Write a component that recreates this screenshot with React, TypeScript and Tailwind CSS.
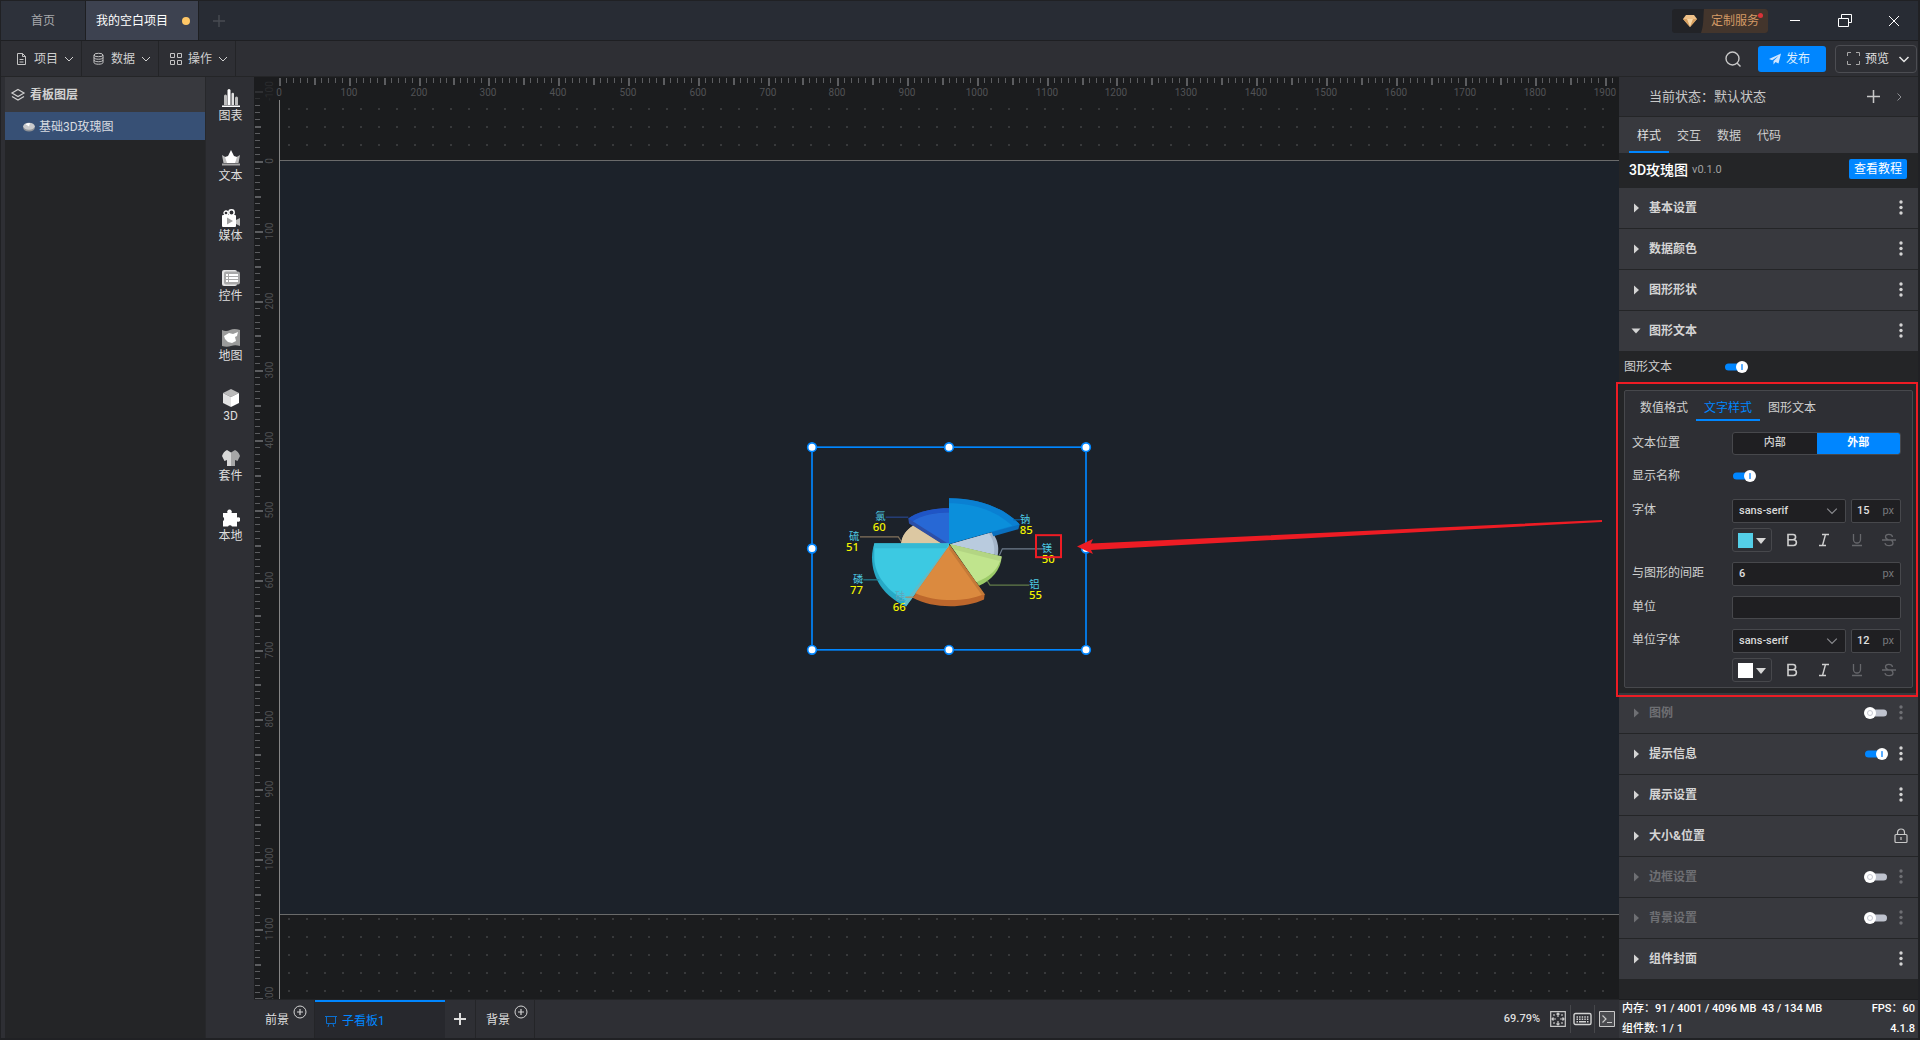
import React, { useState } from "react";

const UNIT = 6.979;

function Chevron({ className = "", dir = "down" }: { className?: string; dir?: "down" | "right" }) {
  return (
    <svg viewBox="0 0 10 10" className={className} fill="none" stroke="currentColor" strokeWidth="1" aria-hidden>
      {dir === "down" ? <path d="M1 3l4 4 4-4" /> : <path d="M3.5 1.5L7 5 3.5 8.5" />}
    </svg>
  );
}

function PlusIcon({ className = "" }: { className?: string }) {
  return (
    <svg viewBox="0 0 12 12" className={className} stroke="currentColor" fill="none" strokeWidth="1.4" aria-hidden>
      <path d="M6 0v12M0 6h12" />
    </svg>
  );
}

function CirclePlus() {
  return (
    <svg viewBox="0 0 14 14" className="size-3.5" stroke="#d4d4d4" fill="none" aria-hidden>
      <circle cx="7" cy="7" r="6" />
      <path d="M7 4v6M4 7h6" strokeWidth="1.2" />
    </svg>
  );
}

function Toggle({ label, on: initial = false }: { label: string; on?: boolean }) {
  const [on, setOn] = useState(initial);
  return (
    <label className="relative block h-3 w-6 shrink-0">
      <input
        type="checkbox"
        aria-label={label}
        checked={on}
        onChange={() => setOn(!on)}
        className="absolute inset-0 m-0 size-full cursor-pointer opacity-0"
      />
      <svg viewBox="0 0 24 12" className="pointer-events-none block h-3 w-6" aria-hidden>
        <rect x="1" y="2.5" width="22" height="7" rx="3.5" fill={on ? "#0086ff" : "#bfc3ce"} />
        <circle cx={on ? 18 : 6} cy="6" r="6" fill="#fff" />
        {on ? (
          <rect x="17" y="3" width="2" height="6" rx="0.5" fill="#5aadff" />
        ) : (
          <circle cx="6" cy="6" r="2.5" fill="none" stroke="#c5c8d2" />
        )}
      </svg>
    </label>
  );
}

function TitleBar() {
  return (
    <header className="flex h-10 shrink-0 items-stretch border-b border-[#1e1f22] bg-[#282c34] text-[12px]">
      <button className="w-[85px] border-r border-[#1e1f22] bg-[#2d313a] text-[#a8a9ac]">首页</button>
      <div className="flex w-[113px] items-center border-r border-[#1e1f22] bg-[#3d4250]">
        <button className="flex flex-1 items-center justify-between pr-2 pl-2.5 text-white">
          我的空白项目
          <span className="size-2 rounded-full bg-[#ffc766]" />
        </button>
      </div>
      <button aria-label="新建" className="w-10 pl-3.5 text-[#484b52]">
        <PlusIcon className="size-3" />
      </button>
      <div className="ml-auto flex items-center">
        <button className="mr-0.5 flex h-6 w-24 items-center overflow-hidden rounded-[3px] bg-[#222327]">
          <svg viewBox="0 0 32 24" className="h-6 w-8" aria-hidden>
            <path d="M14 6h8l3 4-7 8-7-8z" fill="#eec088" />
            <path d="M15 10h6l-3 8z" fill="#f8d8a8" />
            <path d="M11 10h4l3 8zM21 10h4l-7 8z" fill="#d8a060" />
            <path d="M32 0c-1 8 0 16-3 24h3z" fill="#43352c" />
          </svg>
          <span className="relative flex h-6 flex-1 items-center bg-[#43352c] pl-[7px] text-[#d49a66]">
            定制服务
            <span className="absolute top-1 right-[5px] size-[5px] rounded-full bg-[#d93238]" />
          </span>
        </button>
        <button aria-label="最小化" className="flex h-10 w-[50px] items-center justify-center text-white">
          <svg viewBox="0 0 16 16" className="size-4" stroke="currentColor"><path d="M3 7.500h10" /></svg>
        </button>
        <button aria-label="还原" className="flex h-10 w-[50px] items-center justify-center text-white">
          <svg viewBox="0 0 16 16" className="size-4" stroke="currentColor" fill="none">
            <path d="M1.500 5.500h10v8h-10zM4.500 5.500v-4h10v8h-3" />
          </svg>
        </button>
        <button aria-label="关闭" className="flex h-10 w-12 items-center justify-center text-white">
          <svg viewBox="0 0 16 16" className="size-4" stroke="currentColor"><path d="M3 3l10 10M13 3L3 13" /></svg>
        </button>
      </div>
    </header>
  );
}

const menuIcons = [
  <path key="a" d="M2.500 1.500h5l3 3v8h-8zM7.500 1.500v3h3M4.500 7.500h4M4.500 10h4" />,
  <g key="b">
    <ellipse cx="6.500" cy="3" rx="4.500" ry="1.700" />
    <path d="M2 3v7.500c0 2.300 9 2.300 9 0V3M2 5.500c0 2.300 9 2.300 9 0M2 8c0 2.300 9 2.300 9 0" />
  </g>,
  <path key="c" d="M1.500 1.500h4v4h-4zM8.500 1.500h4v4h-4zM1.500 8.500h4v4h-4zM8.500 8.500h4v4h-4z" />,
];

function MenuBar() {
  return (
    <div className="flex h-9 shrink-0 items-stretch border-b border-[#242527] bg-[#2e2f34] text-[12px] text-[#d0d0d0]">
      <nav className="flex">
        {["项目", "数据", "操作"].map((name, i) => (
          <button key={name} className="flex w-[77px] items-center gap-[5px] border-r border-[#232427] pl-2.5 first:w-[81px] first:pl-3.5">
            <svg viewBox="0 0 14 14" className="size-3.5" fill="none" stroke="#c4c4c4" aria-hidden>
              {menuIcons[i]}
            </svg>
            {name}
            <Chevron className="ml-px size-2.5" />
          </button>
        ))}
      </nav>
      <div className="ml-auto flex items-center pr-px">
        <button aria-label="搜索" className="mr-4">
          <svg viewBox="0 0 18 18" className="size-[18px]" fill="none" stroke="#c8c8c8" strokeWidth="1.400">
            <circle cx="8.500" cy="8.500" r="6.500" />
            <path d="M13 13l3.500 3.500" />
          </svg>
        </button>
        <button className="mr-[9px] flex h-[26px] w-[68px] items-center gap-[5px] rounded-[3px] bg-[#0086ff] pl-[11px] text-[#dceeff]">
          <svg viewBox="0 0 12 12" className="size-3" fill="#cfe6ff" aria-hidden>
            <path d="M12 .5L0 6l3.200 1.300L9.500 3 4.500 8v3.500l2-2.500 3 1.500z" />
          </svg>
          发布
        </button>
        <button className="flex h-7 w-[82px] items-center gap-[5px] rounded-[4px] border border-[#4c4d52] pl-[11px] text-[#e0e0e0]">
          <svg viewBox="0 0 13 13" className="size-[13px]" fill="none" stroke="#a8a8a8" aria-hidden>
            <path d="M.500 4V.500H4M9 .500h3.500V4M12.500 9v3.500H9M4 12.500H.500V9" />
          </svg>
          预览
          <svg viewBox="0 0 12 12" className="ml-1 size-3" fill="none" stroke="#e6e6e6" strokeWidth="1.500" aria-hidden>
            <path d="M1.500 4L6 8.500 10.500 4" />
          </svg>
        </button>
      </div>
    </div>
  );
}

function LayerPanel() {
  return (
    <aside className="ml-1 flex w-[200px] shrink-0 flex-col bg-[#242527] text-[12px]">
      <h2 className="flex h-[35px] items-center gap-1 bg-[#38393e] pl-[5px] font-bold text-[#d2d2d2]">
        <svg viewBox="0 0 16 14" className="h-3.5 w-4" fill="none" stroke="#d0d0d0" strokeWidth="1.200" aria-hidden>
          <path d="M8 1.500l6 3.500-6 3.500L2 5zM2 8.500l6 3.500 6-3.500" />
        </svg>
        看板图层
      </h2>
      <button className="flex h-7 items-center gap-1 bg-[#375075] pt-px pl-[18px] text-[#d8dbe0]">
        <svg viewBox="0 0 12 10" className="h-2.5 w-3" aria-hidden>
          <ellipse cx="6" cy="5.800" rx="5.800" ry="3.800" fill="#8f9297" />
          <ellipse cx="6" cy="4.300" rx="5.800" ry="3.500" fill="#c9cacc" />
          <path d="M6 4.500L2.500 2.200A6 3.500 0 0 1 7 .9z" fill="#fff" />
        </svg>
        基础3D玫瑰图
      </button>
    </aside>
  );
}

const tools: { name: string; icon: React.ReactNode }[] = [
  {
    name: "图表",
    icon: (
      <>
        <path d="M2 7a1 1 0 0 1 3 0v9H2zM13 9a1.200 1.200 0 0 1 3 0v7h-3z" fill="#bdbdbd" />
        <path d="M5.500 1.500a1.500 1.500 0 0 1 3 0V16h-3z" fill="#fff" />
        <path d="M9.500 5a1.200 1.200 0 0 1 2.500 0v11H9.500z" fill="#e0e0e0" />
        <path d="M0 16.500h18V18H0z" fill="#fff" />
      </>
    ),
  },
  {
    name: "文本",
    icon: (
      <>
        <path d="M0 6l5 3 4-3 4 3 5-3-1.500 8h-15z" fill="#bdbdbd" />
        <path d="M9 1l3 6 3 1-2 6H5L3 8l3-1z" fill="#fff" />
        <path d="M0 14.500h18V16.500H0z" fill="#a6a6a6" />
      </>
    ),
  },
  {
    name: "媒体",
    icon: (
      <>
        <circle cx="4" cy="4" r="2" fill="none" stroke="#fff" strokeWidth="1.300" />
        <circle cx="9.500" cy="3.500" r="2.700" fill="none" stroke="#fff" strokeWidth="1.500" />
        <rect x="0" y="6" width="14" height="12" rx="1" fill="#fff" />
        <path d="M14 11l4-2v8l-4-2z" fill="#bdbdbd" />
        <path d="M5 8.500l6 3.500-6 3.500z" fill="#a0a0a0" />
      </>
    ),
  },
  {
    name: "控件",
    icon: (
      <>
        <rect x="0" y="1" width="15" height="16" rx="2" fill="#e4e4e4" />
        <rect x="2" y="2.500" width="16" height="13" rx="2" fill="#a9a9a9" />
        <path d="M4 5h2v2H4zM7 5h9v2H7zM4 8h2v2H4zM7 8h9v2H7zM4 11h2v2H4zM7 11h9v2H7z" fill="#fff" />
      </>
    ),
  },
  {
    name: "地图",
    icon: (
      <>
        <path d="M0 1q4 2 8 0t10 0v16q-5-1.500-9 0T0 17z" fill="#9b9b9b" />
        <path d="M2 7l5-3 4 1 5-2-1 4-2 1 1 4-4 2-4-1-3-3z" fill="#fff" />
      </>
    ),
  },
  {
    name: "3D",
    icon: (
      <>
        <path d="M9 0l8 4-8 4-8-4z" fill="#b9b9b9" />
        <path d="M1 4l8 4v10l-8-4z" fill="#e2e2e2" />
        <path d="M17 4L9 8v10l8-4z" fill="#fff" />
      </>
    ),
  },
  {
    name: "套件",
    icon: (
      <>
        <path d="M5 1l4 2.500V17H5v-6l-2.500 1L0 7q1.500-4.500 5-6z" fill="#d8d8d8" />
        <path d="M13 1L9 3.500V17h4v-6l2.500 1L18 7q-1.500-4.500-5-6z" fill="#a6a6a6" />
      </>
    ),
  },
  {
    name: "本地",
    icon: (
      <path
        d="M1 4h4.500a2.300 2.300 0 1 1 4 0H15v4.500a2.300 2.300 0 1 1 0 4V17.500H10a2.300 2.300 0 0 0-4 0H1V12a2.300 2.300 0 0 0 0-4z"
        fill="#fff"
      />
    ),
  },
];

function ToolColumn() {
  return (
    <nav className="flex w-[49px] shrink-0 flex-col border-l border-[#27282b] bg-[#2e2f34] pl-px text-[12px] text-[#dedede]">
      {tools.map((t) => (
        <button key={t.name} className="flex h-15 flex-col items-center justify-center gap-px pb-0.5 leading-4">
          <svg viewBox="0 0 18 18" className="size-[18px]" aria-hidden>
            {t.icon}
          </svg>
          {t.name}
        </button>
      ))}
    </nav>
  );
}

function TopRuler() {
  const ticks = Array.from({ length: 192 }, (_, i) => i);
  return (
    <svg className="block h-[23px] w-full overflow-visible" fill="#5c5d60" aria-hidden>
      {ticks.map((i) => {
        const x = Math.round(i * UNIT);
        const hundred = i % 10 === 0;
        const fifty = i % 5 === 0;
        return (
          <g key={i}>
            <rect x={x} y={1} width={fifty ? 2 : 1} height={hundred ? 8 : fifty ? 7 : 5} />
            {hundred && (
              <text x={x} y={19} textAnchor="middle" fontSize="10" fill="#515255">
                {i * 10}
              </text>
            )}
          </g>
        );
      })}
    </svg>
  );
}

function LeftRuler() {
  const ticks = Array.from({ length: 132 }, (_, i) => i - 10);
  return (
    <svg className="row-span-2 block h-full w-[25px]" fill="#5c5d60" aria-hidden>
      {ticks.map((i) => {
        const y = Math.round(84 + i * UNIT);
        const hundred = i % 10 === 0;
        const fifty = i % 5 === 0;
        return (
          <g key={i} opacity={i < -8 ? 0.3 : 1}>
            <rect x={1} y={y} width={hundred ? 8 : fifty ? 6 : 5} height={fifty ? 2 : 1} />
            {hundred && (
              <text transform={`translate(19 ${y}) rotate(-90)`} textAnchor="middle" fontSize="10" fill="#515255">
                {i * 10}
              </text>
            )}
          </g>
        );
      })}
    </svg>
  );
}

const labels: { name: string; value: number; x: number; y: number; vx: number; vy: number }[] = [
  { name: "钠", value: 85, x: 720, y: 281, vx: 719, vy: 316 },
  { name: "镁", value: 50, x: 785, y: 369, vx: 785, vy: 402 },
  { name: "铝", value: 55, x: 748, y: 478, vx: 747, vy: 511 },
  { name: "硅", value: 66, x: 345, y: 514, vx: 338, vy: 546 },
  { name: "磷", value: 77, x: 219, y: 461, vx: 210, vy: 494 },
  { name: "硫", value: 51, x: 207, y: 332, vx: 198, vy: 366 },
  { name: "氯", value: 60, x: 286, y: 274, vx: 278, vy: 306 },
];

const handles = [
  [96, 54], [507, 54], [918, 54],
  [96, 358], [918, 358],
  [96, 662], [507, 662], [918, 662],
];

function RoseChart() {
  return (
    <svg viewBox="96 54 822 608" className="absolute top-[286px] left-[532px] h-[203px] w-[274px] overflow-visible" role="img" aria-label="基础3D玫瑰图">
      <path d="M507 237C450 237 407 250 385 268l2 15 120 74z" fill="#2c4fa8" />
      <path d="M507 237C450 237 407 250 385 268l13 8c28-18 66-26 109-26z" fill="#1f55c6" />
      <path d="M507 250c-42 0-81 8-109 26l109 69z" fill="#2768d5" />
      <path d="M399 290c-24 16-38 38-36 67h143z" fill="#c3ab8c" />
      <path d="M399 290c-22 14-34 32-36 54h122z" fill="#dcc8a2" />
      <path d="M510 345l126-36c16 20 22 42 17 70z" fill="#a4b5c9" />
      <path d="M510 345l116-33c14 18 19 40 16 64z" fill="#b9cbde" />
      <path d="M507 207c90 0 168 30 212 79l-4 14-75 21-6-14-127 38z" fill="#0a6fbe" />
      <path d="M507 207c90 0 168 30 212 79l-209 57h-3z" fill="#0a80d2" />
      <path d="M507 222c76 0 142 24 190 68l-187 53h-3z" fill="#0b8fdb" />
      <path d="M283 343h224v14L378 532C312 502 276 448 276 385c0-15 3-29 7-42z" fill="#27a9c6" />
      <path d="M283 343h224v14L378 514C325 488 283 440 283 385z" fill="#3cc9e2" />
      <path d="M283 343h224l-8 14H281z" fill="#35b9d4" />
      <path d="M507 357L378 532l-6-12 127-163z" fill="#5cbdcb" />
      <path d="M510 345l155 37c-2 38-30 72-68 88z" fill="#9ccb68" />
      <path d="M510 345l153 38c-4 34-34 62-74 76z" fill="#c0e48d" />
      <path d="M510 345l155 37-3 14-138-34z" fill="#b3d583" />
      <path d="M508 350l106 145-2 16c-60 28-152 28-214-5z" fill="#bd672c" />
      <path d="M508 350l104 145c-58 24-144 24-206-3z" fill="#db8a3f" />
      <path d="M508 345l106 150-8 3-98-138z" fill="#c47a38" />
      <g fill="none" strokeWidth="3.500">
        <path d="M317 264h68" stroke="#27478f" />
        <path d="M240 323h115l9 14" stroke="#83735c" />
        <path d="M250 452h48" stroke="#238399" />
        <path d="M658 379l9-20h120" stroke="#6f7d8d" />
        <path d="M622 455l8 13h118" stroke="#627c49" />
        <path d="M700 272h20" stroke="#0b64a5" />
        <path d="M376 504h24" stroke="#ad8a60" />
      </g>
      {labels.map((l) => (
        <g key={l.name}>
          <text x={l.x} y={l.y} fontSize="31" fill={l.name === "硅" ? "#5fa6ba" : "#4fcde6"}>
            {l.name}
          </text>
          <text x={l.vx} y={l.vy} fontSize="34" fontWeight="500" fill="#f4f400" className="font-['Noto_Sans',sans-serif]">
            {l.value}
          </text>
        </g>
      ))}
      <rect x="96" y="54" width="822" height="608" fill="none" stroke="#0086ff" strokeWidth="5" />
      {handles.map(([x, y]) => (
        <circle key={`${x}-${y}`} cx={x} cy={y} r="13" fill="#fff" stroke="#0086ff" strokeWidth="5" />
      ))}
      <rect x="768" y="318" width="75" height="66" fill="none" stroke="#ed1c24" strokeWidth="6" />
    </svg>
  );
}

function Workspace() {
  return (
    <section className="grid min-h-0 flex-1 grid-cols-[25px_1fr] grid-rows-[23px_1fr] overflow-hidden bg-[#1b1c1e]">
      <LeftRuler />
      <TopRuler />
      <div className="relative overflow-hidden border-l border-[#858585]">
        <svg className="block size-full" aria-hidden>
          <defs>
            <pattern id="dots" width="18" height="18" patternUnits="userSpaceOnUse">
              <rect x="8" y="8" width="2" height="2" fill="#38393b" />
            </pattern>
          </defs>
          <rect width="100%" height="100%" fill="url(#dots)" />
        </svg>
        <div className="absolute top-[60px] left-0 h-[755px] w-full border-y border-[#6a6b6b] bg-[#1c222a]">
          <RoseChart />
        </div>
        <svg viewBox="0 0 526 36" className="absolute top-[419px] left-[797px] h-9 w-[526px]" fill="#ed1c24" aria-hidden>
          <path d="M0 27.500L16 20l-2 4.500L525 1v2L14 31l2 4z" />
        </svg>
      </div>
    </section>
  );
}

function BoardBar() {
  return (
    <footer className="flex h-[39px] shrink-0 items-stretch border-t border-[#232427] bg-[#2e2f34] text-[12px] text-[#dedede]">
      <button className="flex w-[61px] items-start gap-1 border-r border-[#242528] pl-[11px]">
        <span className="mt-[11px]">前景</span>
        <span className="mt-[5px]"><CirclePlus /></span>
      </button>
      <button className="flex w-[130px] items-center gap-[5px] border-t-2 border-[#0086ff] bg-[#27282d] pt-0.5 pl-2.5 text-[#0086ff]">
        <svg viewBox="0 0 12 12" className="size-3" fill="none" stroke="#0b6fce" aria-hidden>
          <path d="M0 1.500h12M1.500 1.500v7h9v-7M4 9l-1 3M8 9l1 3" />
        </svg>
        子看板1
      </button>
      <button aria-label="添加看板" className="flex w-[31px] items-center justify-center border-r border-[#242528]">
        <svg viewBox="0 0 12 12" className="size-3" stroke="#dedede" strokeWidth="2"><path d="M6 0v12M0 6h12" /></svg>
      </button>
      <button className="flex w-[59px] items-start gap-1 border-r border-[#242528] pl-2.5">
        <span className="mt-[11px]">背景</span>
        <span className="mt-[5px]"><CirclePlus /></span>
      </button>
      <div className="ml-auto flex items-center pr-1">
        <span className="mr-2.5 text-[11px] font-medium">69.79%</span>
        <button aria-label="适应画布" className="pr-1">
          <svg viewBox="0 0 16 16" className="size-4" fill="none" stroke="#c8c8c8" strokeWidth="1.200">
            <path d="M.700.700h14.600v14.600H.700z" />
            <path d="M8 2v4M8 10v4M2 8h4M10 8h4M6.500 3.500L8 2l1.500 1.500M6.500 12.500L8 14l1.500-1.500M3.500 6.500L2 8l1.500 1.500M12.500 6.500L14 8l-1.500 1.500" />
            <path d="M4 3v2M3 4h2M12 3v2M11 4h2M4 11v2M3 12h2M12 11v2M11 12h2" strokeWidth=".7" />
          </svg>
        </button>
        <button aria-label="快捷键" className="flex h-7 items-center border-x border-[#46474b] px-0.5">
          <svg viewBox="0 0 19 14" className="h-3.5 w-[19px]" fill="none" stroke="#d2d2d2" strokeWidth="1.400">
            <rect x="1" y="1.500" width="17" height="11" rx="1.500" />
            <path d="M3.500 5h12M3.500 7.300h12" strokeDasharray="1.500 1.100" />
            <path d="M3.500 9.800h1.500M6 9.800h7M14 9.800h1.500" />
          </svg>
        </button>
        <button aria-label="控制台" className="pl-1">
          <svg viewBox="0 0 16 16" className="size-4" fill="#4a4b4f" stroke="#c8c8c8">
            <path d="M.5.5h15v15H.5z" />
            <path d="M3.500 4.500L7 8l-3.500 3.500M8 11.500h5" fill="none" strokeWidth="1.200" />
          </svg>
        </button>
      </div>
    </footer>
  );
}

function SectionHead({ name, open, dim, toggle, lock }: { name: string; open?: boolean; dim?: boolean; toggle?: boolean; lock?: boolean }) {
  return (
    <div className={`flex h-[41px] items-center border-b border-[#242527] bg-[#38393e] pr-3 pl-3 text-[12px] ${dim ? "text-[#6e6f73]" : "text-[#d4d4d4]"}`}>
      <button aria-expanded={!!open} className="flex flex-1 items-center gap-2 font-bold">
        <svg viewBox="0 0 10 10" className="size-2.5" fill="currentColor" aria-hidden>
          {open ? <path d="M.500 2.500h9L5 7.500z" /> : <path d="M3 .500v9L8 5z" />}
        </svg>
        {name}
      </button>
      {toggle !== undefined && <Toggle label={name} on={toggle} />}
      {lock ? (
        <button aria-label="锁定" className="-mr-0.5">
          <svg viewBox="0 0 14 16" className="h-4 w-3.5" fill="none" stroke="#c8c8c8" strokeWidth="1.200">
            <rect x="1" y="6.500" width="12" height="8" rx="1" />
            <path d="M3.500 6.500V4.500a3.500 3.500 0 0 1 7 0v2M7 9v3" />
          </svg>
        </button>
      ) : (
        <button aria-label={`${name}更多`} className="ml-2">
          <svg viewBox="0 0 10 16" className="h-4 w-2.5" fill="currentColor">
            <circle cx="5" cy="2" r="1.700" />
            <circle cx="5" cy="7.500" r="1.700" />
            <circle cx="5" cy="13" r="1.700" />
          </svg>
        </button>
      )}
    </div>
  );
}

function Row({ label, htmlFor, children }: { label: string; htmlFor?: string; children: React.ReactNode }) {
  return (
    <div className="flex items-start">
      <label htmlFor={htmlFor} className="w-[100px] shrink-0 leading-[22px]">
        {label}
      </label>
      <div className="min-w-0 flex-1">{children}</div>
    </div>
  );
}

function FontRow({ id, label, size, swatch }: { id: string; label: string; size: string; swatch: string }) {
  return (
    <Row label={label} htmlFor={id}>
      <div className="flex gap-[5px]">
        <div className="relative w-[114px]">
          <select id={id} className="h-6 w-full appearance-none rounded-[2px] border border-[#47484c] bg-[#1f1f22] pl-1.5 text-[11px] font-medium text-[#dadada]">
            <option>sans-serif</option>
          </select>
          <Chevron className="pointer-events-none absolute top-[6px] right-2 size-3 text-[#8a8b8f]" />
        </div>
        <div className="flex h-6 flex-1 items-center rounded-[2px] border border-[#47484c] bg-[#1f1f22] pr-1.5 pl-[5px]">
          <input aria-label={`${label}大小`} defaultValue={size} className="w-0 flex-1 bg-transparent text-[11px] font-medium text-[#e0e0e0] outline-none" />
          <span className="text-[11px] text-[#77787c]">px</span>
        </div>
      </div>
      <div className="mt-[5px] flex h-6 items-center">
        <button aria-label={`${label}颜色`} className="flex h-6 w-10 items-center gap-[3px] rounded-[3px] border border-[#47484c] pl-[5px]">
          <span className="size-[15px]" style={{ backgroundColor: swatch }} />
          <svg viewBox="0 0 10 6" className="mt-0.5 h-1.5 w-2.5" fill="#d6d6d6" aria-hidden><path d="M0 0h10L5 6z" /></svg>
        </button>
        <div className="ml-[13px] flex flex-1 justify-between pr-[5px]">
          <button aria-label="粗体">
            <svg viewBox="0 0 14 14" className="size-3.5" fill="none" stroke="#cfcfcf" strokeWidth="1.600">
              <path d="M3 1.500h5a2.600 2.600 0 0 1 0 5.200H3zM3 6.700h5.500a2.900 2.900 0 0 1 0 5.800H3z" />
            </svg>
          </button>
          <button aria-label="斜体">
            <svg viewBox="0 0 14 14" className="size-3.5" fill="none" stroke="#cfcfcf" strokeWidth="1.400">
              <path d="M5 1.500h7M2 12.500h7M8.500 1.500l-3 11" />
            </svg>
          </button>
          <button aria-label="下划线">
            <svg viewBox="0 0 14 14" className="size-3.5" fill="none" stroke="#66676b" strokeWidth="1.300">
              <path d="M3.500 1v5.500a3.500 3.500 0 0 0 7 0V1M2 12.500h10" />
            </svg>
          </button>
          <button aria-label="删除线">
            <svg viewBox="0 0 14 14" className="size-3.5" fill="none" stroke="#66676b" strokeWidth="1.300">
              <path d="M10.500 4C10 .500 3.500.500 3.500 4c0 1.500 1.500 2.400 3.500 3M3 10c.500 3.500 8 3.500 8 0 0-1.300-.7-2.200-2-2.800M0 7h14" />
            </svg>
          </button>
        </div>
      </div>
    </Row>
  );
}

function TextStylePanel() {
  return (
    <div className="relative mx-[5px] rounded-[2px] border border-[#47484c] bg-[#2e2f34] px-[7px] pb-[5px]">
      <div role="tablist" className="flex h-[30px] items-stretch">
        <button role="tab" className="border-b-2 border-transparent px-2 pt-1.5">数值格式</button>
        <button role="tab" aria-selected className="border-b-2 border-[#0086ff] px-2 pt-1.5 text-[#0086ff]">文字样式</button>
        <button role="tab" className="border-b-2 border-transparent px-2 pt-1.5">图形文本</button>
      </div>
      <div className="mt-[11px] flex flex-col gap-2.5 pr-1">
        <Row label="文本位置">
          <div className="flex h-[23px] overflow-hidden rounded-[3px] border border-[#47484c] bg-[#1f1f22] text-[11px] font-medium">
            <button className="flex-1">内部</button>
            <button className="flex-1 bg-[#0086ff] font-bold text-white">外部</button>
          </div>
        </Row>
        <Row label="显示名称">
          <div className="flex h-6 items-center pb-0.5"><Toggle label="显示名称" on /></div>
        </Row>
        <FontRow id="font" label="字体" size="15" swatch="#54cfe8" />
        <Row label="与图形的间距" htmlFor="gap">
          <div className="flex h-6 items-center rounded-[2px] border border-[#47484c] bg-[#1f1f22] px-1.5">
            <input id="gap" defaultValue="6" className="w-0 flex-1 bg-transparent text-[11px] font-medium text-[#e0e0e0] outline-none" />
            <span className="text-[11px] text-[#77787c]">px</span>
          </div>
        </Row>
        <Row label="单位" htmlFor="unit">
          <input id="unit" className="block h-[23px] w-full rounded-[2px] border border-[#47484c] bg-[#1f1f22] px-1.5 text-[11px] outline-none" />
        </Row>
        <FontRow id="unit-font" label="单位字体" size="12" swatch="#ffffff" />
      </div>
      <div className="pointer-events-none absolute -top-[9px] -right-1.5 -bottom-2.5 -left-[9px] z-10 border-2 border-[#ed1c24]" />
    </div>
  );
}

function Inspector() {
  return (
    <aside className="relative flex w-[299px] shrink-0 flex-col bg-[#242527] text-[12px] text-[#cfcfcf]">
      <div className="flex h-10 items-center border-b border-[#242527] bg-[#2e2f34] pr-3.5 pl-[30px] text-[13px] text-[#c8c8c8]">
        <span className="flex-1">当前状态：默认状态</span>
        <button aria-label="新增状态"><PlusIcon className="size-[13px]" /></button>
        <button aria-label="展开" className="ml-3.5"><Chevron dir="right" className="size-2.5 text-[#8f9094]" /></button>
      </div>
      <div role="tablist" className="flex h-9 items-stretch bg-[#38393e] pl-2.5">
        {["样式", "交互", "数据", "代码"].map((t, i) => (
          <button key={t} role="tab" aria-selected={i === 0} className={`w-10 border-b-2 pt-1 ${i === 0 ? "border-[#0086ff] text-[#e0e0e0]" : "border-transparent"}`}>
            {t}
          </button>
        ))}
      </div>
      <div className="flex h-[35px] items-center pr-[11px] pl-2.5">
        <h2 className="text-[14px] font-medium text-white">3D玫瑰图</h2>
        <span className="ml-1 text-[11px] text-[#a0a0a0]">v0.1.0</span>
        <a href="#tutorial" className="mb-1 ml-auto flex h-5 w-[58px] items-center justify-center rounded-[2px] bg-[#0086ff] text-white">查看教程</a>
      </div>
      <SectionHead name="基本设置" />
      <SectionHead name="数据颜色" />
      <SectionHead name="图形形状" />
      <SectionHead name="图形文本" open />
      <div className="flex h-[38px] items-center pb-2 pl-[5px]">
        <span className="w-[100px]">图形文本</span>
        <Toggle label="图形文本" on />
      </div>
      <TextStylePanel />
      <div className="h-[5px]" />
      <SectionHead name="图例" dim toggle={false} />
      <SectionHead name="提示信息" toggle />
      <SectionHead name="展示设置" />
      <SectionHead name="大小&位置" lock />
      <SectionHead name="边框设置" dim toggle={false} />
      <SectionHead name="背景设置" dim toggle={false} />
      <SectionHead name="组件封面" />
      <div className="mt-auto h-[39px] border-t border-[#1c1d1f] bg-[#36373c] px-[3px] text-[11px] leading-[18px] font-medium text-white">
        <div className="flex h-5 justify-between">
          <span className="whitespace-pre">内存：91 / 4001 / 4096 MB  43 / 134 MB</span>
          <span>FPS：60</span>
        </div>
        <div className="flex h-[18px] justify-between">
          <span>组件数: 1 / 1</span>
          <span>4.1.8</span>
        </div>
      </div>
    </aside>
  );
}

export default function App() {
  return (
    <div className="flex h-screen flex-col overflow-hidden border border-r-2 border-b-2 border-[#202124] bg-[#2e2f34] font-['Roboto','Noto_Sans_CJK_SC',sans-serif]">
      <TitleBar />
      <MenuBar />
      <main className="flex min-h-0 flex-1">
        <LayerPanel />
        <ToolColumn />
        <div className="flex min-w-0 flex-1 flex-col">
          <Workspace />
          <BoardBar />
        </div>
        <Inspector />
      </main>
    </div>
  );
}
